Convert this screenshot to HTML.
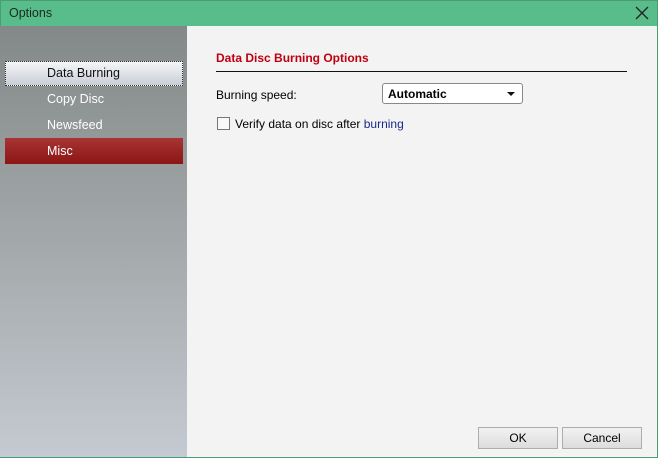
<!DOCTYPE html><html><head><style>
body{margin:0;width:658px;height:458px;overflow:hidden;font-family:"Liberation Sans",sans-serif;font-size:12px;}
.win{position:absolute;left:0;top:0;width:656px;height:456px;border:1px solid #4a9d72;background:#f3f3f3;}
.title{position:absolute;left:0;top:0;width:656px;height:25px;background:#58bd8a;}
.title span{position:absolute;left:8px;top:5px;font-size:12.5px;color:#1a2a22}
.side{position:absolute;left:-1px;top:25px;width:187px;height:431px;background:linear-gradient(#838888,#a3a8aa 50%,#c4cad1);}
.it{position:absolute;left:47px;color:#fff;font-size:12.5px}
.sel{position:absolute;left:5px;top:35px;width:176px;height:23px;border:1px dotted #333;background:linear-gradient(#f5f6f8,#c9ced6);}
.misc{position:absolute;left:5px;top:112px;width:178px;height:26px;background:linear-gradient(#a83434,#8c1515);}
.btn{position:absolute;top:426px;height:20px;border:1px solid #adadad;background:linear-gradient(#f2f2f2,#dcdcdc);text-align:center;line-height:20px;font-size:12px}
</style></head><body><div class="win">
<div class="title"><span>Options</span>
<svg style="position:absolute;left:634px;top:5px" width="14" height="14"><path d="M1 1L13 13M13 1L1 13" stroke="#222" stroke-width="1.3"/></svg></div>
<div class="side">
<div class="sel"></div><div class="it" style="top:40px;color:#111">Data Burning</div>
<div class="it" style="top:66px">Copy Disc</div>
<div class="it" style="top:92px">Newsfeed</div>
<div class="misc"></div><div class="it" style="top:118px">Misc</div>
</div>
<div style="position:absolute;left:215px;top:50px;color:#c00010;font-weight:bold;font-size:12px">Data Disc Burning Options</div>
<div style="position:absolute;left:215px;top:70px;width:411px;height:1px;background:#111"></div>
<div style="position:absolute;left:215px;top:87px">Burning speed:</div>
<div style="position:absolute;left:381px;top:82px;width:139px;height:19px;border:1px solid #888;border-radius:3px;background:#fff;"><b style="position:absolute;left:5px;top:3px">Automatic</b>
<svg style="position:absolute;left:124px;top:8px" width="8" height="5"><path d="M0 0H8L4 4Z" fill="#111"/></svg></div>
<div style="position:absolute;left:216px;top:116px;width:11px;height:11px;border:1px solid #777;background:#f8f8f8"></div>
<div style="position:absolute;left:234px;top:116px">Verify data on disc after <span style="color:#1a2a8a">burning</span></div>
<div class="btn" style="left:477px;width:78px">OK</div>
<div class="btn" style="left:561px;width:78px">Cancel</div>
</div></body></html>
